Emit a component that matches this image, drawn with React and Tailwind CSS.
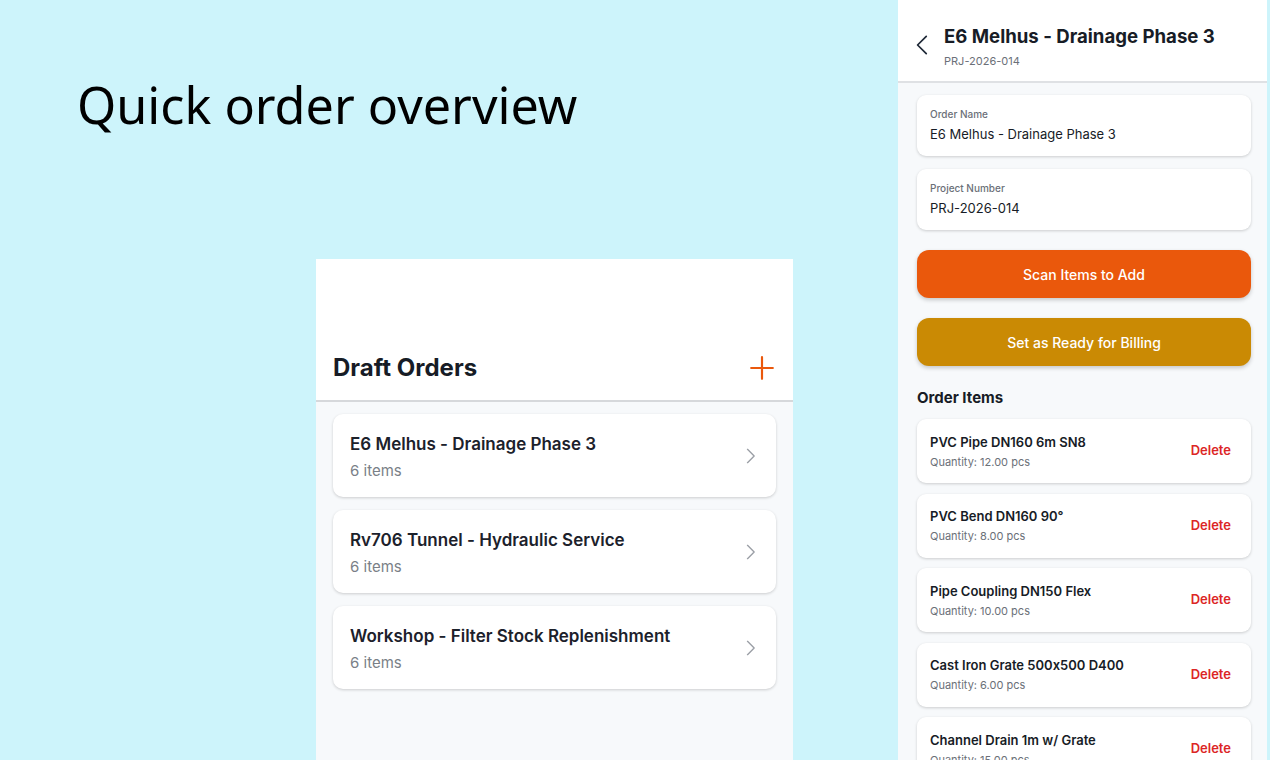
import React from "react";

const drafts = [
  "E6 Melhus - Drainage Phase 3",
  "Rv706 Tunnel - Hydraulic Service",
  "Workshop - Filter Stock Replenishment",
];

const items = [
  ["PVC Pipe DN160 6m SN8", "Quantity: 12.00 pcs"],
  ["PVC Bend DN160 90°", "Quantity: 8.00 pcs"],
  ["Pipe Coupling DN150 Flex", "Quantity: 10.00 pcs"],
  ["Cast Iron Grate 500x500 D400", "Quantity: 6.00 pcs"],
  ["Channel Drain 1m w/ Grate", "Quantity: 15.00 pcs"],
];

function Chevron({ className, dir = "right" }) {
  return (
    <svg viewBox="0 0 24 24" className={className} fill="none" stroke="currentColor" strokeWidth="1.6" strokeLinecap="round" strokeLinejoin="round">
      {dir === "right" ? <path d="M9 4l8 8-8 8" /> : <path d="M15 4l-8 8 8 8" />}
    </svg>
  );
}

export default function App() {
  return (
    <div className="w-[1270px] h-[760px] overflow-hidden bg-[#cdf4fb] flex [font-feature-settings:'calt'_0]" style={{ fontFamily: "Inter, 'Noto Sans', sans-serif" }}>
      <div className="w-[898px] flex flex-col">
        <div className="pl-[77px] pt-[75px] h-[259px] shrink-0">
          <h1 className="text-[50.3px] leading-[60px] font-normal text-black" style={{ fontFamily: "'Noto Sans', sans-serif" }}>
            Quick order overview
          </h1>
        </div>
        <div className="ml-[316px] w-[477px] flex-1 bg-[#f7f9fb] flex flex-col">
          <div className="h-[143px] bg-white border-b-2 border-[#d6d8db] flex items-end justify-between pl-[17px] pr-[18px] pb-[16px]">
            <span className="text-[24px] leading-[32px] font-bold text-[#171c26]">Draft Orders</span>
            <svg viewBox="0 0 24 24" className="w-[26px] h-[26px] text-[#ea580c] mb-[3px]" fill="none" stroke="currentColor" strokeWidth="2" strokeLinecap="round">
              <path d="M12 2v20M2 12h20" />
            </svg>
          </div>
          <div className="px-[17px] pt-[12px] flex flex-col gap-[13px]">
            {drafts.map((d) => (
              <div key={d} className="h-[83px] bg-white rounded-[10px] shadow-[0_1px_3px_rgba(0,0,0,0.18)] flex items-center justify-between pl-[17px] pr-[16px]">
                <div className="flex flex-col gap-[5px] mt-[2px]">
                  <span className="text-[17px] leading-[24px] font-semibold text-[#1c212b]">{d}</span>
                  <span className="text-[15px] leading-[20px] text-[#7a7f87]">6 items</span>
                </div>
                <Chevron className="w-[20px] h-[20px] text-[#9a9ea5]" />
              </div>
            ))}
          </div>
        </div>
      </div>
      <div className="w-[369px] h-[760px] bg-[#f7f9fb] flex flex-col">
        <div className="h-[83px] bg-white border-b-2 border-[#dfe1e4] flex items-start pl-[12px] pt-[24px] gap-[8px] shrink-0">
          <Chevron dir="left" className="w-[26px] h-[26px] text-[#1f2937] mt-[8px]" />
          <div className="flex flex-col">
            <span className="text-[18.6px] leading-[24px] font-bold text-[#171c26]">E6 Melhus - Drainage Phase 3</span>
            <span className="text-[11px] leading-[14px] text-[#6b7078] mt-[6px]">PRJ-2026-014</span>
          </div>
        </div>
        <div className="pl-[19px] pr-[16px] pt-[12px] flex flex-col">
          {[["Order Name", "E6 Melhus - Drainage Phase 3"], ["Project Number", "PRJ-2026-014"]].map(([l, v]) => (
            <div key={l} className="h-[61px] mb-[13px] bg-white rounded-[9px] shadow-[0_1px_3px_rgba(0,0,0,0.18)] pl-[13px] pt-[12px] flex flex-col gap-[4px]">
              <span className="text-[10px] leading-[14px] font-medium text-[#6b7078]">{l}</span>
              <span className="text-[13px] leading-[18px] text-[#171c26]">{v}</span>
            </div>
          ))}
          <div className="mt-[7px] h-[48px] rounded-[12px] bg-[#ea580c] shadow-[0_2px_4px_rgba(0,0,0,0.2)] flex items-center justify-center text-white text-[14px] font-medium">
            Scan Items to Add
          </div>
          <div className="mt-[20px] h-[48px] rounded-[12px] bg-[#ca8a04] shadow-[0_2px_4px_rgba(0,0,0,0.2)] flex items-center justify-center text-white text-[14px] font-medium">
            Set as Ready for Billing
          </div>
          <div className="mt-[22px] text-[15px] leading-[20px] font-bold text-[#171c26]">Order Items</div>
          <div className="mt-[11px] flex flex-col gap-[10.5px]">
            {items.map(([n, q]) => (
              <div key={n} className="h-[64px] shrink-0 bg-white rounded-[9px] shadow-[0_1px_3px_rgba(0,0,0,0.18)] flex items-center justify-between pl-[13px] pr-[20px]">
                <div className="flex flex-col gap-[3px]">
                  <span className="text-[13px] leading-[18px] font-semibold text-[#171c26]">{n}</span>
                  <span className="text-[11px] leading-[16px] text-[#6b7078]">{q}</span>
                </div>
                <span className="text-[13px] font-semibold text-[#dc2626]">Delete</span>
              </div>
            ))}
          </div>
        </div>
      </div>
    </div>
  );
}
